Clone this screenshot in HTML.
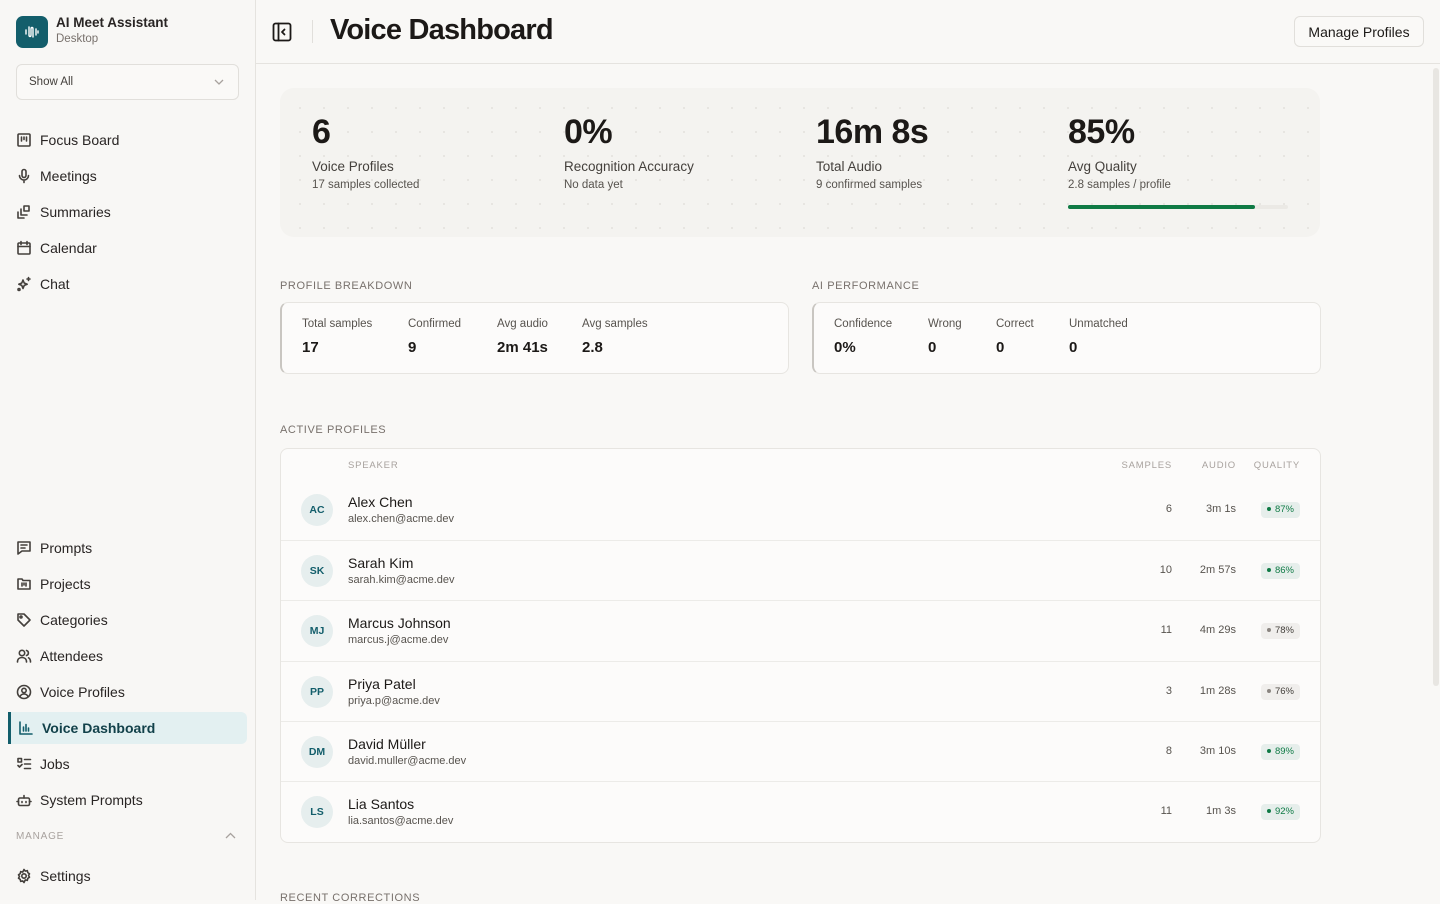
<!DOCTYPE html>
<html><head><meta charset="utf-8"><style>
*{box-sizing:border-box;margin:0;padding:0}
body{width:1440px;height:900px;overflow:hidden;background:#f9f8f6;font-family:"Liberation Sans",sans-serif;color:#1c1917;position:relative}
.sb{position:absolute;left:0;top:0;width:256px;height:900px;background:#f8f7f5;border-right:1px solid #e5e3df}
.logo{position:absolute;left:16px;top:16px;width:32px;height:32px;border-radius:7px;background:#135e6b}
.an{position:absolute;left:56px;top:15px;font-size:13.5px;font-weight:bold;color:#292524}
.ad{position:absolute;left:56px;top:33px;font-size:11.5px;color:#78716c}
.sel{position:absolute;left:16px;top:64px;width:223px;height:36px;border:1px solid #e1dfdb;border-radius:6px;background:#faf9f7;font-size:11.5px;padding:11px 12px;color:#44403c}
.ni{position:absolute;left:16px;height:32px;display:flex;align-items:center;font-size:14px;color:#292524}
.ni svg{width:16px;height:16px;margin-right:8px;stroke:#44403c;fill:none;stroke-width:1.6;stroke-linecap:round;stroke-linejoin:round}
.act{left:8px;width:239px;background:#e3f0f1;border-left:3px solid #135e6b;border-radius:0 6px 6px 0;padding-left:7px;font-weight:bold;color:#12414a}
.act svg{stroke:#135e6b}
.hdr{position:absolute;left:256px;top:0;right:0;height:64px;border-bottom:1px solid #e5e3df}
h1{position:absolute;left:74px;top:14px;font-size:29px;font-weight:bold;letter-spacing:-0.8px}
.btn{position:absolute;right:16px;top:16px;width:130px;height:31px;border:1px solid #e1dfdb;border-radius:6px;background:#faf9f7;font-size:14px;text-align:center;line-height:30px}
.stat{position:absolute;left:280px;top:88px;width:1040px;height:149px;border-radius:14px;background-color:#f4f3f0;background-image:radial-gradient(#e6e4e0 1px,transparent 1.2px);background-size:24px 24px;background-position:8px 8px}
.sc{position:absolute;top:25px}
.sc b{display:block;font-size:34px;line-height:38px;letter-spacing:-0.5px}
.sc .l{font-size:13.5px;color:#44403c;margin-top:8px}
.sc .s{font-size:11.5px;color:#57534e;margin-top:5px}
.lab{position:absolute;font-size:11px;letter-spacing:0.6px;color:#78716c}
.card{position:absolute;top:302px;height:72px;background:#fcfbfa;border:1px solid #e7e5e1;border-left:2px solid #c9c6c1;border-radius:8px}
.kv{position:absolute;top:15px;font-size:11.5px;color:#57534e}
.kv b{display:block;font-size:15px;color:#1c1917;margin-top:9px}
.tbl{position:absolute;left:280px;top:448px;width:1041px;height:395px;background:#fcfbfa;border:1px solid #e7e5e1;border-radius:8px;overflow:hidden}
.th{position:absolute;top:11px;font-size:9.5px;letter-spacing:0.8px;color:#a8a29e}
.row{position:absolute;left:0;width:100%;height:60px;border-top:1px solid #ecebe8}
.av{position:absolute;left:20px;top:14px;width:32px;height:32px;border-radius:50%;background:#e6eeee;color:#135e6b;font-size:10.5px;font-weight:bold;text-align:center;line-height:32px}
.nm{position:absolute;left:67px;top:14px;font-size:14px}
.em{position:absolute;left:67px;top:33px;font-size:11px;color:#57534e}
.n1{position:absolute;right:148px;top:23px;font-size:11px;color:#57534e}
.n2{position:absolute;right:84px;top:23px;font-size:11px;color:#57534e}
.q{position:absolute;right:20px;top:22px;height:16px;padding:0 6px;border-radius:4px;font-size:9.5px;line-height:16px;background:#e6eeeb;color:#0f7a45}
.q.g{background:#f0eeec;color:#44403c}
.q::before{content:"";display:inline-block;width:4px;height:4px;border-radius:50%;background:currentColor;margin-right:4px;vertical-align:1px}
.q.g::before{background:#8a8580}
</style></head><body>
<div class="sb">
<div class="logo"><svg width="32" height="32" viewBox="0 0 32 32" fill="none" stroke="#fff" stroke-width="1.4" stroke-linecap="round"><path d="M10 14v4M13 11v8c0 2 2 2 2 0v-6c0-2 2-2 2 0v8M20 13v6M22 15v2"/></svg></div>
<div class="an">AI Meet Assistant</div><div class="ad">Desktop</div>
<div class="sel">Show All<svg style="position:absolute;right:14px;top:13px" width="10" height="8" viewBox="0 0 10 8" fill="none" stroke="#a8a29e" stroke-width="1.3"><path d="M1 2l4 4 4-4"/></svg></div>
<div class="ni" style="top:124px"><svg viewBox="0 0 16 16"><rect x="2" y="2" width="12" height="12" rx="1"/><path d="M5.5 5v4M8 5v2.5M10.5 5v4"/></svg>Focus Board</div>
<div class="ni" style="top:160px"><svg viewBox="0 0 16 16"><rect x="6" y="1.5" width="4" height="8" rx="2"/><path d="M3.5 7.5a4.5 4.5 0 0 0 9 0M8 12v2.5"/></svg>Meetings</div>
<div class="ni" style="top:196px"><svg viewBox="0 0 16 16"><path d="M8 2h5v5H8zM5 5v6h6M2 8v6h6"/></svg>Summaries</div>
<div class="ni" style="top:232px"><svg viewBox="0 0 16 16"><rect x="2" y="3" width="12" height="11" rx="1"/><path d="M2 6.5h12M5 1.5v3M11 1.5v3"/></svg>Calendar</div>
<div class="ni" style="top:268px"><svg viewBox="0 0 16 16"><path d="M7 4l1.2 3 3 1.2-3 1.2L7 12.5 5.8 9.4 2.8 8.2l3-1.2zM12.5 1.5v3M11 3h3"/><circle cx="3" cy="13.5" r="1"/></svg>Chat</div>
<div class="ni" style="top:532px"><svg viewBox="0 0 16 16"><path d="M2 2h12v9H6l-4 3zM5 5h6M5 8h4"/></svg>Prompts</div>
<div class="ni" style="top:568px"><svg viewBox="0 0 16 16"><path d="M2 3h4l1 1.5h7V13H2z"/><path d="M6 7v3M8 7v2M10 7v3"/></svg>Projects</div>
<div class="ni" style="top:604px"><svg viewBox="0 0 16 16"><path d="M2 8V2h6l6 6-6 6z"/><circle cx="5" cy="5" r="1"/></svg>Categories</div>
<div class="ni" style="top:640px"><svg viewBox="0 0 16 16"><circle cx="6" cy="5" r="2.7"/><path d="M1.5 14c0-3 2-4.5 4.5-4.5S10.5 11 10.5 14M10.5 2.5a2.6 2.6 0 0 1 0 5M12.5 9.8c1.3.6 2 2 2 4.2"/></svg>Attendees</div>
<div class="ni" style="top:676px"><svg viewBox="0 0 16 16"><circle cx="8" cy="8" r="6.5"/><circle cx="8" cy="6.5" r="2.2"/><path d="M4 12.5c1-2 2.5-2.5 4-2.5s3 .5 4 2.5"/></svg>Voice Profiles</div>
<div class="ni act" style="top:712px"><svg viewBox="0 0 16 16"><path d="M2 2v12h12M5.5 11V7M8 11V4.5M10.5 11V8"/></svg>Voice Dashboard</div>
<div class="ni" style="top:748px"><svg viewBox="0 0 16 16"><path d="M2 2.5h3.5V6H2zM2 9.5l1.5 1.5 2.5-2.5M8.5 3.5h6M8.5 8h6M8.5 12.5h6"/></svg>Jobs</div>
<div class="ni" style="top:784px"><svg viewBox="0 0 16 16"><rect x="2.5" y="6" width="11" height="7.5" rx="1.5"/><path d="M8 6V3.5M6 9.5v1M10 9.5v1M1 9.5h1.5M13.5 9.5H15"/></svg>System Prompts</div>
<div class="lab" style="left:16px;top:831px;font-size:10px;color:#a8a29e;letter-spacing:0.8px">MANAGE</div>
<svg style="position:absolute;left:225px;top:832px" width="11" height="8" viewBox="0 0 11 8" fill="none" stroke="#a8a29e" stroke-width="1.3"><path d="M1 6l4.5-4.5L10 6"/></svg>
<div class="ni" style="top:860px"><svg viewBox="0 0 16 16"><circle cx="8" cy="8" r="2.2"/><path d="M8 1.5l1.3 1.6 2-.5.5 2 1.7 1.2-1 1.7 1 1.7-1.7 1.2-.5 2-2-.5L8 14.5l-1.3-1.6-2 .5-.5-2L2.5 10.2l1-1.7-1-1.7L4.2 5.6l.5-2 2 .5z"/></svg>Settings</div>
</div>
<div class="hdr">
<svg style="position:absolute;left:16px;top:22px" width="20" height="20" viewBox="0 0 20 20" fill="none" stroke="#1c1917" stroke-width="1.8" stroke-linecap="round" stroke-linejoin="round"><rect x="1.5" y="1.5" width="17" height="17" rx="2"/><path d="M6.5 1.5v17M12.5 7.5L10 10l2.5 2.5"/></svg>
<div style="position:absolute;left:56px;top:20px;width:1px;height:23px;background:#e1dfdb"></div>
<h1>Voice Dashboard</h1>
<div class="btn">Manage Profiles</div>
</div>
<div style="position:absolute;right:1px;top:68px;width:6px;height:618px;border-radius:3px;background:#e8e6e2"></div>
<div class="stat">
<div class="sc" style="left:32px"><b>6</b><div class="l">Voice Profiles</div><div class="s">17 samples collected</div></div>
<div class="sc" style="left:284px"><b>0%</b><div class="l">Recognition Accuracy</div><div class="s">No data yet</div></div>
<div class="sc" style="left:536px"><b>16m 8s</b><div class="l">Total Audio</div><div class="s">9 confirmed samples</div></div>
<div class="sc" style="left:788px"><b>85%</b><div class="l">Avg Quality</div><div class="s">2.8 samples / profile</div></div>
<div style="position:absolute;left:788px;top:117px;width:220px;height:4px;border-radius:2px;background:#ebe9e5"><div style="width:187px;height:4px;border-radius:2px;background:#0f7a45"></div></div>
</div>
<div class="lab" style="left:280px;top:280px">PROFILE BREAKDOWN</div>
<div class="lab" style="left:812px;top:280px">AI PERFORMANCE</div>
<div class="card" style="left:280px;width:509px">
<div class="kv" style="left:20px">Total samples<b>17</b></div>
<div class="kv" style="left:126px">Confirmed<b>9</b></div>
<div class="kv" style="left:215px">Avg audio<b>2m 41s</b></div>
<div class="kv" style="left:300px">Avg samples<b>2.8</b></div>
</div>
<div class="card" style="left:812px;width:509px">
<div class="kv" style="left:20px">Confidence<b>0%</b></div>
<div class="kv" style="left:114px">Wrong<b>0</b></div>
<div class="kv" style="left:182px">Correct<b>0</b></div>
<div class="kv" style="left:255px">Unmatched<b>0</b></div>
</div>
<div class="lab" style="left:280px;top:424px">ACTIVE PROFILES</div>
<div class="tbl">
<div class="th" style="left:67px">SPEAKER</div>
<div class="th" style="right:148px">SAMPLES</div>
<div class="th" style="right:84px">AUDIO</div>
<div class="th" style="right:20px">QUALITY</div>
<div class="row" style="top:31px;border-top:none"><div class="av">AC</div><div class="nm">Alex Chen</div><div class="em">alex.chen@acme.dev</div><div class="n1">6</div><div class="n2">3m 1s</div><div class="q">87%</div></div>
<div class="row" style="top:91px"><div class="av">SK</div><div class="nm">Sarah Kim</div><div class="em">sarah.kim@acme.dev</div><div class="n1">10</div><div class="n2">2m 57s</div><div class="q">86%</div></div>
<div class="row" style="top:151px"><div class="av">MJ</div><div class="nm">Marcus Johnson</div><div class="em">marcus.j@acme.dev</div><div class="n1">11</div><div class="n2">4m 29s</div><div class="q g">78%</div></div>
<div class="row" style="top:212px"><div class="av">PP</div><div class="nm">Priya Patel</div><div class="em">priya.p@acme.dev</div><div class="n1">3</div><div class="n2">1m 28s</div><div class="q g">76%</div></div>
<div class="row" style="top:272px"><div class="av">DM</div><div class="nm">David Müller</div><div class="em">david.muller@acme.dev</div><div class="n1">8</div><div class="n2">3m 10s</div><div class="q">89%</div></div>
<div class="row" style="top:332px"><div class="av">LS</div><div class="nm">Lia Santos</div><div class="em">lia.santos@acme.dev</div><div class="n1">11</div><div class="n2">1m 3s</div><div class="q">92%</div></div>
</div>
<div class="lab" style="left:280px;top:892px">RECENT CORRECTIONS</div>
</body></html>
